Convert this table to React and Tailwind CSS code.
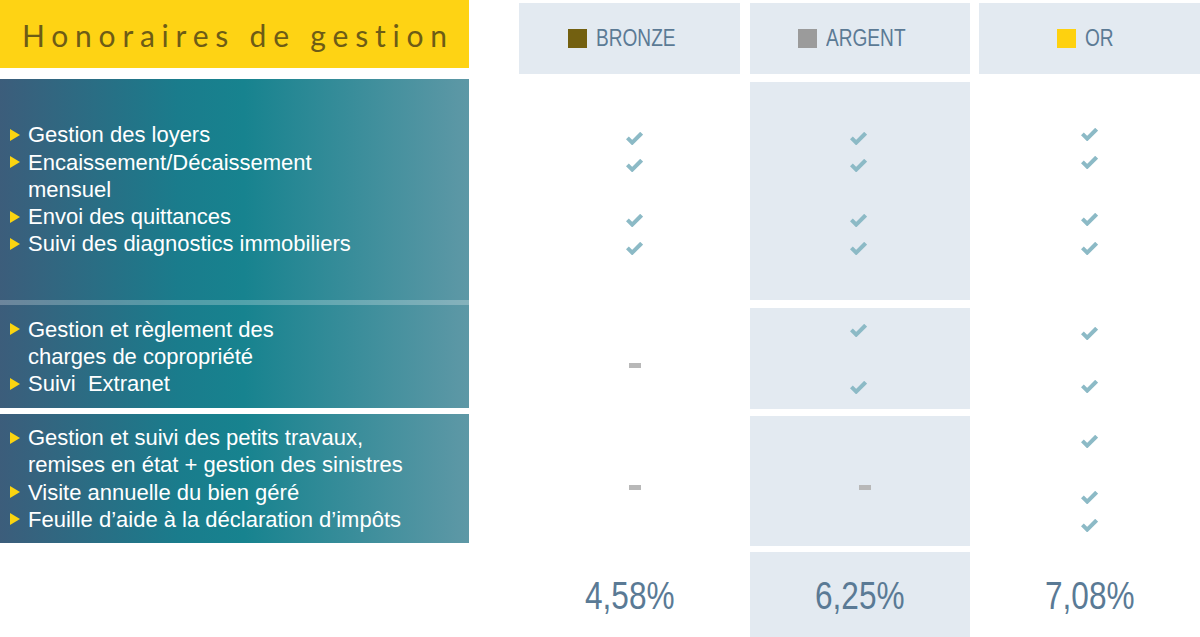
import React from "react";

const GRAD = "bg-[linear-gradient(to_right,#3c5d7b_0%,#1a7c8c_38%,#17838f_52%,#5e98a6_100%)]";

function Check() {
  return (
    <svg width="17" height="13" viewBox="0 0 17 13" className="block shrink-0 w-[17px] h-[13px]">
      <polyline points="1.4,5.8 6.2,10.6 15.6,1.2" fill="none" stroke="#8cbac6" strokeWidth="4" strokeLinecap="butt" strokeLinejoin="miter" />
    </svg>
  );
}

function Dash() {
  return <div className="w-[12px] h-[5px] bg-[#b8b8b8]" />;
}

function Slots({ marks, h = "h-[27.5px]" }) {
  return (
    <div className="flex flex-col">
      {marks.map((m, i) => (
        <div key={i} className={`${h} flex items-center justify-center`}>
          {m ? <Check /> : null}
        </div>
      ))}
    </div>
  );
}

function Bullet() {
  return (
    <svg width="10" height="12" viewBox="0 0 10 12" className="block shrink-0 w-[10px] h-[12px]">
      <polygon points="0,0 10,6 0,12" fill="#fad411" />
    </svg>
  );
}

function Lines({ items }) {
  return (
    <div className="flex flex-col text-white text-[22px] leading-[27.3px] font-['Liberation_Sans',Arial,sans-serif]">
      {items.map((it, i) => (
        <div key={i} className="flex items-center">
          <div className="w-[28px] shrink-0 pl-[10px] flex items-center">{it.b ? <Bullet /> : null}</div>
          <span className="whitespace-pre">{it.t}</span>
        </div>
      ))}
    </div>
  );
}

function Header({ color, label, tw, pr }) {
  return (
    <div className={`mt-[3px] h-[71px] bg-[#e3eaf1] flex items-center justify-center gap-[9px] ${pr}`}>
      <div className={`w-[19px] h-[19px] shrink-0 ${color}`} />
      <span className={`inline-block ${tw} overflow-visible`}>
        <span className="inline-block origin-left scale-x-[0.83] whitespace-nowrap text-[23px] text-[#5b7a95] font-['Liberation_Sans',sans-serif] leading-none mt-[1px]">
          {label}
        </span>
      </span>
    </div>
  );
}

function Column({ bg, header, c1, c2, c3, pct, className }) {
  return (
    <div className={`flex flex-col ${className}`}>
      {header}
      <div className={`mt-[8px] h-[218px] ${bg} flex items-center justify-center`}>{c1}</div>
      <div className={`mt-[8px] h-[101px] ${bg} flex items-center justify-center`}>{c2}</div>
      <div className={`mt-[7px] h-[130px] ${bg} flex items-center justify-center`}>{c3}</div>
      <div className={`mt-[6px] h-[85px] ${bg} flex items-center justify-center`}>
        <span className="inline-block w-[90px]">
          <span className="inline-block origin-left scale-x-[0.81] whitespace-nowrap text-[39px] text-[#5a7a95] font-['Liberation_Sans',sans-serif] leading-none mt-[2px]">
            {pct}
          </span>
        </span>
      </div>
    </div>
  );
}

export default function App() {
  return (
    <div className="w-[1200px] h-[637px] bg-white flex overflow-hidden">
      <div className="w-[469px] flex flex-col">
        <div className="h-[68px] bg-[#fed314] flex items-center pl-[22px]">
          <span className="text-[30px] text-[#6d5c16] tracking-[6.8px] font-['Lato',sans-serif] leading-none mt-[2px]">
            Honoraires de gestion
          </span>
        </div>
        <div className={`mt-[11px] h-[221px] ${GRAD} flex items-center`}>
          <Lines
            items={[
              { b: true, t: "Gestion des loyers" },
              { b: true, t: "Encaissement/Décaissement" },
              { b: false, t: "mensuel" },
              { b: true, t: "Envoi des quittances" },
              { b: true, t: "Suivi des diagnostics immobiliers" },
            ]}
          />
        </div>
        <div className={`h-[5px] ${GRAD}`}>
          <div className="h-full bg-white/25" />
        </div>
        <div className={`h-[103px] ${GRAD} flex items-center`}>
          <Lines
            items={[
              { b: true, t: "Gestion et règlement des" },
              { b: false, t: "charges de copropriété" },
              { b: true, t: "Suivi  Extranet" },
            ]}
          />
        </div>
        <div className={`mt-[6px] h-[129px] ${GRAD} flex items-center`}>
          <Lines
            items={[
              { b: true, t: "Gestion et suivi des petits travaux," },
              { b: false, t: "remises en état + gestion des sinistres" },
              { b: true, t: "Visite annuelle du bien géré" },
              { b: true, t: "Feuille d’aide à la déclaration d’impôts" },
            ]}
          />
        </div>
      </div>

      <Column
        className="ml-[50px] w-[221px]"
        bg="bg-white"
        header={<Header color="bg-[#736010]" label="BRONZE" tw="w-[80px]" pr="pr-[15px]" />}
        c1={<div className="pl-[10px] pt-[4px]"><Slots marks={[1, 1, 0, 1, 1]} /></div>}
        c2={<div className="pt-[13px] pl-[10px]"><Dash /></div>}
        c3={<div className="pt-[13px] pl-[10px]"><Dash /></div>}
        pct="4,58%"
      />
      <Column
        className="ml-[10px] w-[220px]"
        bg="bg-[#e3eaf1]"
        header={<Header color="bg-[#9b9b9b]" label="ARGENT" tw="w-[80px]" pr="pr-[17px]" />}
        c1={<div className="pr-[4px] pt-[4px]"><Slots marks={[1, 1, 0, 1, 1]} /></div>}
        c2={<div className="pr-[4px]"><Slots marks={[1, 0, 1]} h="h-[28.5px]" /></div>}
        c3={<div className="pt-[13px] pl-[10px]"><Dash /></div>}
        pct="6,25%"
      />
      <Column
        className="ml-[9px] w-[221px]"
        bg="bg-white"
        header={<Header color="bg-[#fed10f]" label="OR" tw="w-[29px]" pr="pr-[9px]" />}
        c1={<Slots marks={[1, 1, 0, 1, 1]} h="h-[28.5px]" />}
        c2={<div className="pt-[2px]"><Slots marks={[1, 0, 1]} h="h-[26.5px]" /></div>}
        c3={<div className="pt-[5px]"><Slots marks={[1, 0, 1, 1]} h="h-[28px]" /></div>}
        pct="7,08%"
      />
    </div>
  );
}
